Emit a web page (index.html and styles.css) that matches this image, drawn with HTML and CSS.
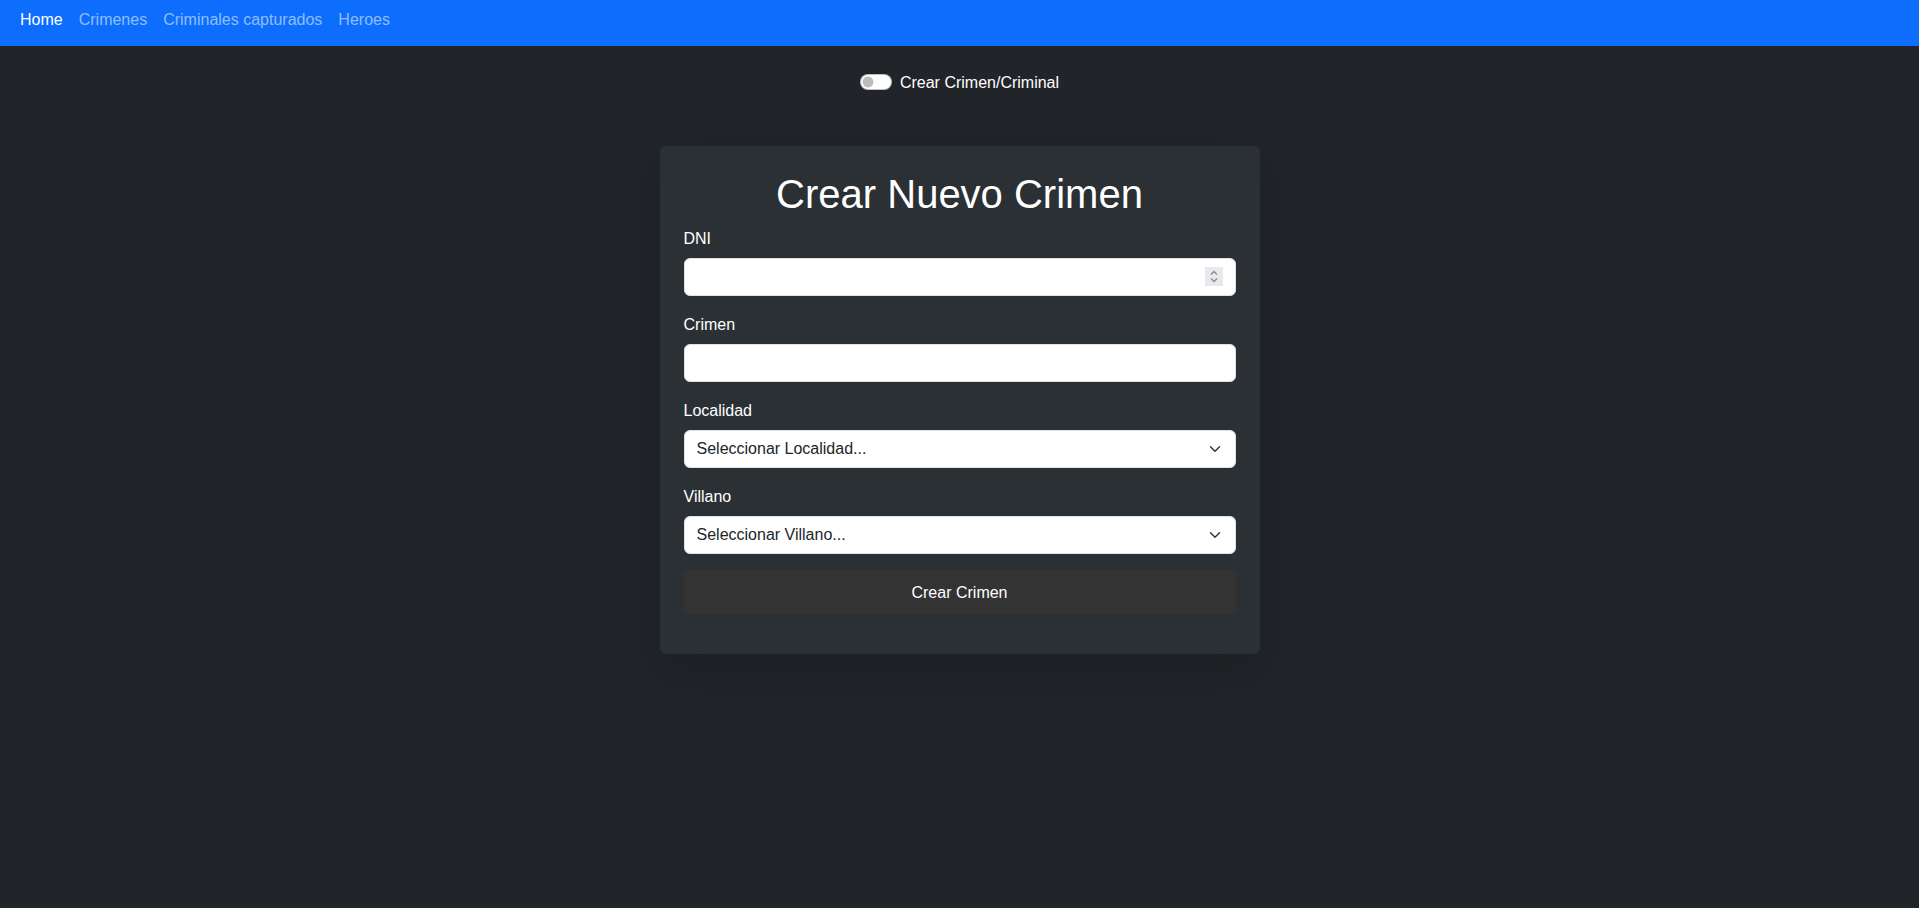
FILE: index.html
```html
<!DOCTYPE html>
<html lang="es">
<head>
<meta charset="utf-8">
<title>Crear Nuevo Crimen</title>
<link rel="stylesheet" href="styles.css">
</head>
<body>
<nav class="navbar">
  <ul class="nav-links">
    <li><a class="nav-link active" href="#">Home</a></li>
    <li><a class="nav-link" href="#">Crimenes</a></li>
    <li><a class="nav-link" href="#">Criminales capturados</a></li>
    <li><a class="nav-link" href="#">Heroes</a></li>
  </ul>
</nav>
<main class="page">
  <div class="switch-row">
    <input class="switch" type="checkbox" id="modo">
    <label class="switch-label" for="modo">Crear Crimen/Criminal</label>
  </div>
  <section class="card">
    <h1 class="card-title">Crear Nuevo Crimen</h1>
    <form class="form">
      <div class="group">
        <label class="form-label" for="dni">DNI</label>
        <div class="number-wrap">
          <input class="form-control" type="number" id="dni">
          <span class="spinner" aria-hidden="true">
            <svg width="18" height="19" viewBox="0 0 18 19">
              <rect width="18" height="19" fill="#e9e9ed"/>
              <polyline points="6,7.5 9,4.5 12,7.5" fill="none" stroke="#8a8a8e" stroke-width="1.3"/>
              <polyline points="6,11.5 9,14.5 12,11.5" fill="none" stroke="#8a8a8e" stroke-width="1.3"/>
            </svg>
          </span>
        </div>
      </div>
      <div class="group">
        <label class="form-label" for="crimen">Crimen</label>
        <input class="form-control" type="text" id="crimen">
      </div>
      <div class="group">
        <label class="form-label" for="localidad">Localidad</label>
        <select class="form-select" id="localidad">
          <option>Seleccionar Localidad...</option>
        </select>
      </div>
      <div class="group">
        <label class="form-label" for="villano">Villano</label>
        <select class="form-select" id="villano">
          <option>Seleccionar Villano...</option>
        </select>
      </div>
      <button class="btn-submit" type="button">Crear Crimen</button>
    </form>
  </section>
</main>
</body>
</html>
```
FILE: styles.css
```css
* { box-sizing: border-box; }

html, body {
  margin: 0;
  padding: 0;
}

body {
  font-family: "Liberation Sans", Arial, sans-serif;
  font-size: 16px;
  line-height: 24px;
  background: #212529;
  color: #dee2e6;
  min-height: 908px;
}

.navbar {
  background: #0d6efd;
  height: 46px;
  padding: 8px 12px 14px;
}

.nav-links {
  display: flex;
  list-style: none;
  margin: 0;
  padding: 0;
}

.nav-link {
  display: block;
  padding: 0 8px;
  color: rgba(255, 255, 255, 0.55);
  text-decoration: none;
  line-height: 24px;
}

.nav-link.active { color: #fff; }

.page {
  display: flex;
  flex-direction: column;
  align-items: center;
}

.switch-row {
  display: flex;
  align-items: flex-start;
  height: 24px;
  margin-top: 24px;
  gap: 8px;
}

.switch {
  appearance: none;
  -webkit-appearance: none;
  margin: 4px 0 0;
  width: 32px;
  height: 16px;
  border-radius: 16px;
  border: 1px solid rgba(0, 0, 0, 0.25);
  background-color: #fff;
  background-image: radial-gradient(circle at 7px 50%, #bcbcbc 5px, rgba(188,188,188,0) 5.8px);
}

.switch-label {
  color: #fff;
  line-height: 24px;
  padding-top: 1px;
}

.card {
  width: 600px;
  margin-top: 52px;
  padding: 24px;
  background: #2b3035;
  border-radius: 6px;
  box-shadow: 0 16px 48px rgba(0, 0, 0, 0.175);
}

.card-title {
  margin: 0 0 8px;
  font-size: 40px;
  font-weight: 400;
  line-height: 48px;
  text-align: center;
  color: #fff;
}

.group { margin-bottom: 16px; }

.form-label {
  display: block;
  padding-top: 1px;
  margin-bottom: 7px;
  color: #fff;
  line-height: 24px;
}

.number-wrap { position: relative; }

.spinner {
  position: absolute;
  right: 13px;
  top: 9px;
  width: 18px;
  height: 19px;
  display: block;
}

.spinner svg { display: block; }

.form-control,
.form-select {
  display: block;
  width: 100%;
  height: 38px;
  margin: 0;
  padding: 6px 12px;
  font-family: inherit;
  font-size: 16px;
  line-height: 24px;
  color: #212529;
  background-color: #fff;
  border: 1px solid #dee2e6;
  border-radius: 6px;
  outline: none;
}

.form-control::-webkit-inner-spin-button,
.form-control::-webkit-outer-spin-button {
  -webkit-appearance: none;
  margin: 0;
}

.form-select {
  appearance: none;
  -webkit-appearance: none;
  padding-right: 36px;
  background-image: url("data:image/svg+xml,%3csvg xmlns='http://www.w3.org/2000/svg' viewBox='0 0 16 16'%3e%3cpath fill='none' stroke='%23343a40' stroke-linecap='round' stroke-linejoin='round' stroke-width='2' d='m2 5 6 6 6-6'/%3e%3c/svg%3e");
  background-repeat: no-repeat;
  background-position: right 12px center;
  background-size: 16px 12px;
}

.btn-submit {
  display: block;
  width: 100%;
  height: 44px;
  margin: 0 0 16px;
  padding: 11px 12px 9px;
  font-family: inherit;
  font-size: 16px;
  line-height: 24px;
  color: #fff;
  background: #333333;
  border: none;
  border-radius: 0;
}
```
